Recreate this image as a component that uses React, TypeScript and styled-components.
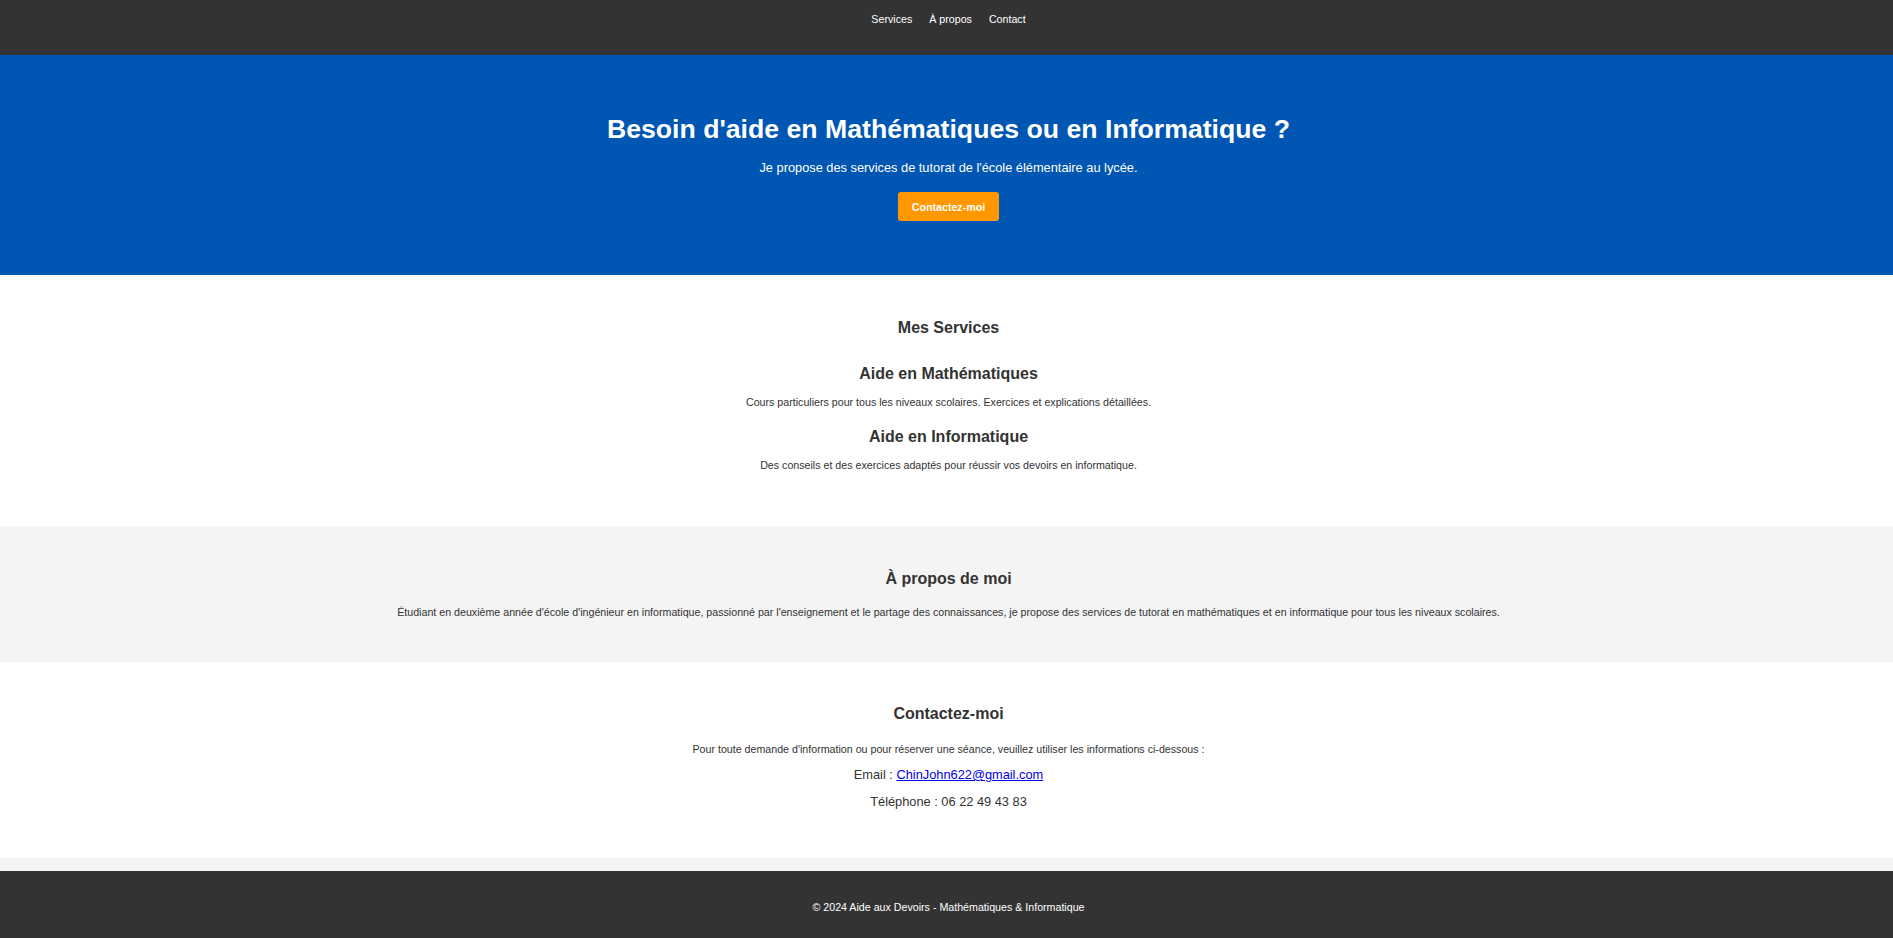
import React from "react";
import styled, { createGlobalStyle } from "styled-components";

const GlobalStyle = createGlobalStyle`
  html, body {
    margin: 0;
    padding: 0;
  }
  body {
    background: #f4f4f4;
    color: #333333;
    font-family: "Liberation Sans", Arial, Helvetica, sans-serif;
  }
  * { box-sizing: border-box; }
`;

const Header = styled.header`
  background: #333333;
  color: #ffffff;
  padding: 13px 18px 30px 22px;
`;

const NavList = styled.ul`
  list-style: none;
  margin: 0;
  padding: 0;
  display: flex;
  justify-content: center;
  gap: 17px;
`;

const NavLink = styled.a`
  color: #ffffff;
  text-decoration: none;
  font-size: 10.67px;
  line-height: 12px;
  display: block;
`;

const Hero = styled.section`
  background: #0056b3;
  color: #ffffff;
  padding: 58px 18px 54px 22px;
  display: flex;
  flex-direction: column;
  align-items: center;
  text-align: center;
`;

const HeroTitle = styled.h1`
  margin: 0;
  font-size: 26.67px;
  line-height: 32px;
  font-weight: bold;
`;

const HeroText = styled.p`
  margin: 15px 0 0;
  font-size: 12.8px;
  line-height: 16px;
`;

const CtaButton = styled.a`
  margin-top: 16px;
  display: inline-flex;
  align-items: center;
  justify-content: center;
  height: 29px;
  padding: 0 14px;
  background: #ff9800;
  color: #ffffff;
  border-radius: 3px;
  font-size: 10.67px;
  font-weight: bold;
  text-decoration: none;
`;

const Section = styled.section<{ $bg: string; $top: number; $bottom: number }>`
  background: ${(p) => p.$bg};
  padding: ${(p) => p.$top}px 18px ${(p) => p.$bottom}px 22px;
  display: flex;
  flex-direction: column;
  align-items: center;
  text-align: center;
`;

const SectionTitle = styled.h2`
  margin: 0;
  font-size: 16px;
  line-height: 20px;
  font-weight: bold;
`;

const ServiceList = styled.div`
  margin-top: 26px;
  display: flex;
  flex-direction: column;
  align-items: center;
  gap: 18px;
`;

const ServiceItem = styled.div`
  display: flex;
  flex-direction: column;
  align-items: center;
  gap: 11px;
`;

const ServiceTitle = styled.h3`
  margin: 0;
  font-size: 16px;
  line-height: 20px;
  font-weight: bold;
`;

const SmallText = styled.p<{ $top?: number }>`
  margin: ${(p) => p.$top ?? 0}px 0 0;
  font-size: 10.67px;
  line-height: 14px;
`;

const ContactLine = styled.p`
  margin: 11px 0 0;
  font-size: 12.8px;
  line-height: 16px;
`;

const MailLink = styled.a`
  color: #0000ee;
  text-decoration: underline;
`;

const Footer = styled.footer`
  margin-top: 13px;
  background: #333333;
  color: #ffffff;
  padding: 29px 18px 24px 22px;
  text-align: center;
`;

const FooterText = styled.p`
  margin: 0;
  font-size: 10.67px;
  line-height: 14px;
`;

export default function App() {
  return (
    <>
      <GlobalStyle />
      <Header>
        <nav>
          <NavList>
            <li><NavLink href="#services">Services</NavLink></li>
            <li><NavLink href="#about">À propos</NavLink></li>
            <li><NavLink href="#contact">Contact</NavLink></li>
          </NavList>
        </nav>
      </Header>
      <Hero>
        <HeroTitle>Besoin d'aide en Mathématiques ou en Informatique ?</HeroTitle>
        <HeroText>Je propose des services de tutorat de l'école élémentaire au lycée.</HeroText>
        <CtaButton href="#contact">Contactez-moi</CtaButton>
      </Hero>
      <Section id="services" $bg="#ffffff" $top={43} $bottom={54}>
        <SectionTitle>Mes Services</SectionTitle>
        <ServiceList>
          <ServiceItem>
            <ServiceTitle>Aide en Mathématiques</ServiceTitle>
            <SmallText>Cours particuliers pour tous les niveaux scolaires. Exercices et explications détaillées.</SmallText>
          </ServiceItem>
          <ServiceItem>
            <ServiceTitle>Aide en Informatique</ServiceTitle>
            <SmallText>Des conseils et des exercices adaptés pour réussir vos devoirs en informatique.</SmallText>
          </ServiceItem>
        </ServiceList>
      </Section>
      <Section id="about" $bg="#f4f4f4" $top={43} $bottom={43}>
        <SectionTitle>À propos de moi</SectionTitle>
        <SmallText $top={16}>
          Étudiant en deuxième année d'école d'ingénieur en informatique, passionné par l'enseignement et le partage des connaissances, je propose des services de tutorat en mathématiques et en informatique pour tous les niveaux scolaires.
        </SmallText>
      </Section>
      <Section id="contact" $bg="#ffffff" $top={42} $bottom={48}>
        <SectionTitle>Contactez-moi</SectionTitle>
        <SmallText $top={18}>
          Pour toute demande d'information ou pour réserver une séance, veuillez utiliser les informations ci-dessous :
        </SmallText>
        <ContactLine>
          Email : <MailLink href="mailto:ChinJohn622@gmail.com">ChinJohn622@gmail.com</MailLink>
        </ContactLine>
        <ContactLine>Téléphone : 06 22 49 43 83</ContactLine>
      </Section>
      <Footer>
        <FooterText>© 2024 Aide aux Devoirs - Mathématiques &amp; Informatique</FooterText>
      </Footer>
    </>
  );
}
